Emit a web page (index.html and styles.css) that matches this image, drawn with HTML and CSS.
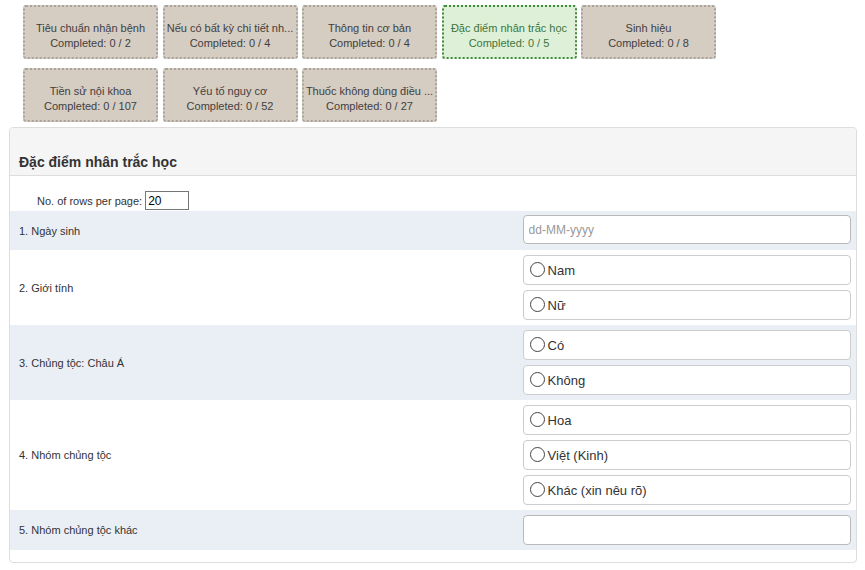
FILE: index.html
```html
<!DOCTYPE html>
<html lang="vi">
<head>
<meta charset="utf-8">
<title>Đặc điểm nhân trắc học</title>
<link rel="stylesheet" href="styles.css">
</head>
<body>
<div class="tabs">
  <div class="tab"><span class="tab-name">Tiêu chuẩn nhận bệnh</span><span>Completed: 0 / 2</span></div>
  <div class="tab"><span class="tab-name">Nếu có bất kỳ chi tiết nh...</span><span>Completed: 0 / 4</span></div>
  <div class="tab"><span class="tab-name">Thông tin cơ bản</span><span>Completed: 0 / 4</span></div>
  <div class="tab active"><span class="tab-name">Đặc điểm nhân trắc học</span><span>Completed: 0 / 5</span></div>
  <div class="tab"><span class="tab-name">Sinh hiệu</span><span>Completed: 0 / 8</span></div>
  <div class="tab"><span class="tab-name">Tiền sử nội khoa</span><span>Completed: 0 / 107</span></div>
  <div class="tab"><span class="tab-name">Yếu tố nguy cơ</span><span>Completed: 0 / 52</span></div>
  <div class="tab"><span class="tab-name">Thuốc không dùng điều ...</span><span>Completed: 0 / 27</span></div>
</div>

<div class="panel">
  <div class="panel-heading"><h3 class="panel-title">Đặc điểm nhân trắc học</h3></div>
  <div class="panel-body">
    <div class="rows-per-page">No. of rows per page: <input class="rpp-input" type="text" value="20"></div>
    <table class="qtable">
      <tr class="striped">
        <td class="q-label">1. Ngày sinh</td>
        <td class="q-answer"><input class="form-control first" type="text" placeholder="dd-MM-yyyy"></td>
      </tr>
      <tr>
        <td class="q-label">2. Giới tính</td>
        <td class="q-answer">
          <div class="radio-box"><span class="radio-circle"></span>Nam</div>
          <div class="radio-box"><span class="radio-circle"></span>Nữ</div>
        </td>
      </tr>
      <tr class="striped">
        <td class="q-label">3. Chủng tộc: Châu Á</td>
        <td class="q-answer">
          <div class="radio-box"><span class="radio-circle"></span>Có</div>
          <div class="radio-box"><span class="radio-circle"></span>Không</div>
        </td>
      </tr>
      <tr>
        <td class="q-label">4. Nhóm chủng tộc</td>
        <td class="q-answer">
          <div class="radio-box"><span class="radio-circle"></span>Hoa</div>
          <div class="radio-box"><span class="radio-circle"></span>Việt (Kinh)</div>
          <div class="radio-box"><span class="radio-circle"></span>Khác (xin nêu rõ)</div>
        </td>
      </tr>
      <tr class="striped">
        <td class="q-label">5. Nhóm chủng tộc khác</td>
        <td class="q-answer"><input class="form-control" type="text"></td>
      </tr>
    </table>
  </div>
</div>
</body>
</html>
```

FILE: styles.css
```css
* { box-sizing: border-box; }

body {
  margin: 0;
  font-family: "Liberation Sans", Arial, sans-serif;
  color: #333;
  background: #fff;
}

.tabs {
  display: flex;
  flex-wrap: wrap;
  gap: 9px 4.5px;
  padding: 5px 0 0 23px;
  max-width: 730px;
}

.tab {
  width: 135px;
  height: 54px;
  border: 2px dotted #aaa39b;
  border-radius: 3px;
  background: #d5ccc2;
  color: #3f3f3f;
  font-size: 11px;
  line-height: 15px;
  padding: 14px 0 0;
  display: flex;
  flex-direction: column;
  align-items: center;
  text-align: center;
}

.tab span {
  display: block;
  white-space: nowrap;
}

.tab.active {
  background: #dff0d8;
  border-color: #3c8a3a;
  color: #3c763d;
}

.panel {
  margin: 5px 8px 0 9px;
  border: 1px solid #dddddd;
  border-radius: 4px;
  overflow: hidden;
}

.panel-heading {
  background: #f5f5f5;
  border-bottom: 1px solid #dddddd;
  padding: 24px 9px 3px;
}

.panel-title {
  margin: 0;
  font-size: 14px;
  line-height: 20px;
  font-weight: bold;
  color: #333;
}

.panel-body {
  padding-bottom: 12px;
}

.rows-per-page {
  display: flex;
  align-items: center;
  gap: 3px;
  font-size: 11px;
  padding: 15px 0 1px 27px;
  height: 35px;
}

.rpp-input {
  width: 44px;
  height: 19px;
  border: 1px solid #767676;
  padding: 0 2px;
  font-family: "Liberation Sans", Arial, sans-serif;
  font-size: 12px;
  color: #000;
  margin: 0;
}

.qtable {
  width: 100%;
  border-collapse: collapse;
}

.qtable tr.striped {
  background: #eaeff5;
}

.q-label {
  width: 60%;
  font-size: 11px;
  padding: 0 9px;
  vertical-align: middle;
}

.q-answer {
  padding: 5px;
}

.form-control {
  display: block;
  width: 100%;
  height: 30px;
  border: 1px solid #b9b9b9;
  border-radius: 4px;
  padding: 0 5px;
  font-family: "Liberation Sans", Arial, sans-serif;
  font-size: 12px;
  color: #333;
  background: #fff;
  margin: 0;
}

.form-control.first {
  height: 29px;
  margin-top: -1px;
  margin-bottom: 1px;
}

.form-control::placeholder {
  color: #999;
}

.radio-box {
  display: flex;
  align-items: center;
  height: 30px;
  border: 1px solid #cccccc;
  border-radius: 4px;
  background: #fff;
  padding-left: 6px;
  font-size: 13px;
  color: #333;
  margin-bottom: 5px;
}

.radio-box:last-child {
  margin-bottom: 0;
}

.radio-circle {
  width: 15px;
  height: 15px;
  border: 1.3px solid #444;
  border-radius: 50%;
  margin-right: 3px;
  margin-top: -2px;
  flex: none;
}
```
